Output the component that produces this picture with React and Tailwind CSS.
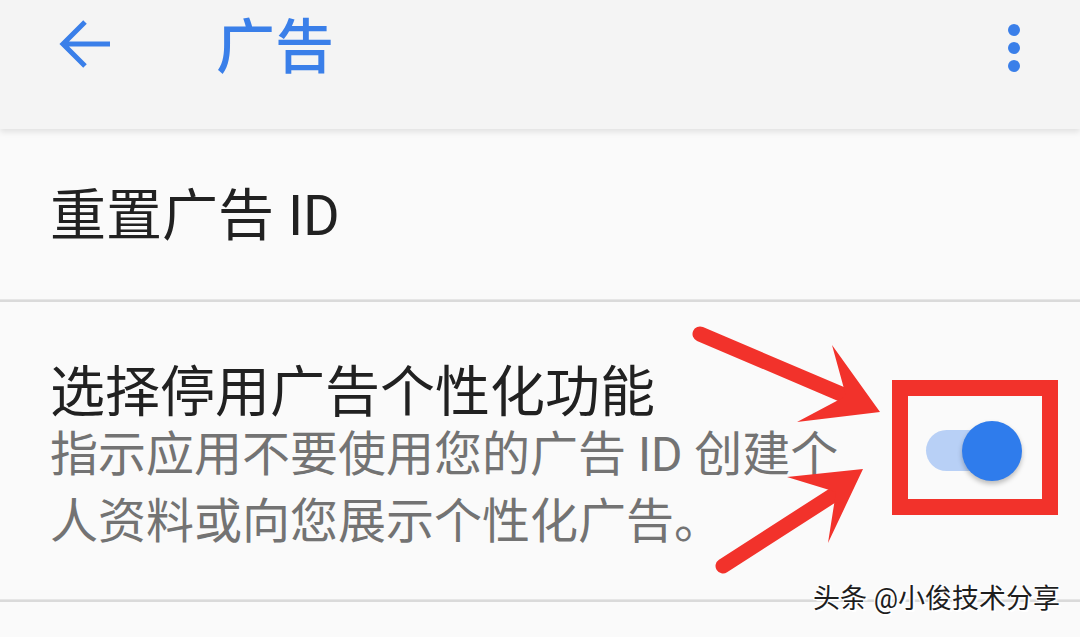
import React from "react";

const FONT = { fontFamily: 'Roboto, "Noto Sans CJK SC", "Noto Sans", sans-serif' };

// Top app bar
const Header = () => (
  <div className="relative z-10 h-[129px] bg-[#f4f4f4] shadow-[0_3px_6px_rgba(0,0,0,0.10)] flex items-center">
    <div className="flex items-center pb-[34px] w-full">
      <svg width="60" height="56" viewBox="0 0 60 56" className="ml-[56px] shrink-0">
        <path
          d="M54 24H8M29 2 7 24l22 22"
          fill="none"
          stroke="#3a7fe9"
          strokeWidth="5"
          strokeLinecap="butt"
          strokeLinejoin="miter"
        />
      </svg>
      <span className="ml-[100px] text-[59px] leading-none font-medium text-[#3a7fe9]">广告</span>
      <div className="ml-auto mr-[60px] flex flex-col gap-[6px]">
        <span className="w-[12px] h-[12px] rounded-full bg-[#3a7fe9]" />
        <span className="w-[12px] h-[12px] rounded-full bg-[#3a7fe9]" />
        <span className="w-[12px] h-[12px] rounded-full bg-[#3a7fe9]" />
      </div>
    </div>
  </div>
);

const Divider = () => <div className="h-[3px] bg-[#dadada] border-t border-[#e6e6e6]" />;

// Switch in "on" state
const Toggle = () => (
  <div className="relative self-center w-[96px] h-[60px] mr-[58px] shrink-0">
    <div className="absolute left-0 top-[9px] w-[78px] h-[41px] rounded-full bg-[#b8d0f6]" />
    <div className="absolute right-0 top-0 w-[60px] h-[60px] rounded-full bg-[#2f7cec] shadow-[0_3px_5px_rgba(0,0,0,0.25)]" />
  </div>
);

// Red annotations drawn over the screenshot
const Annotations = () => (
  <svg className="absolute inset-0 pointer-events-none" width="1080" height="637" viewBox="0 0 1080 637">
    <rect x="900" y="388" width="150" height="119" fill="none" stroke="#f2322b" strokeWidth="16" />
    <line x1="700" y1="334" x2="848" y2="397" stroke="#f2322b" strokeWidth="15" strokeLinecap="round" />
    <polygon points="880,412 832,345 846,396 797,422" fill="#f2322b" />
    <line x1="723" y1="566" x2="838" y2="492" stroke="#f2322b" strokeWidth="15" strokeLinecap="round" />
    <polygon points="863,469 787,477 836,492 828,543" fill="#f2322b" />
  </svg>
);

const Watermark = () => (
  <div
    className="absolute right-[20px] top-[586px] text-[27px] leading-none text-[#1e1e1e]"
    style={{ textShadow: "1px 1px 0 #fff, -1px -1px 0 #fff, 1px -1px 0 #fff, -1px 1px 0 #fff, 2px 2px 1px #fff" }}
  >
    头条 @小俊技术分享
  </div>
);

export default function App() {
  return (
    <div className="relative w-[1080px] h-[637px] overflow-hidden bg-[#fafafa]" style={FONT}>
      <Header />

      <div className="h-[170px] pl-[50px] pt-[55px]">
        <div className="text-[56px] leading-[64px] text-[#212121]">重置广告 ID</div>
      </div>
      <Divider />

      <div className="h-[297px] flex items-start">
        <div className="pl-[50px] flex-1 pt-[61px]">
          <div className="text-[55px] leading-[58px] text-[#212121]">选择停用广告个性化功能</div>
          <div className="text-[48px] leading-[67px] text-[#737373]">
            <div>指示应用不要使用您的广告 ID 创建个</div>
            <div>人资料或向您展示个性化广告。</div>
          </div>
        </div>
        <Toggle />
      </div>
      <Divider />

      <Annotations />
      <Watermark />
    </div>
  );
}
